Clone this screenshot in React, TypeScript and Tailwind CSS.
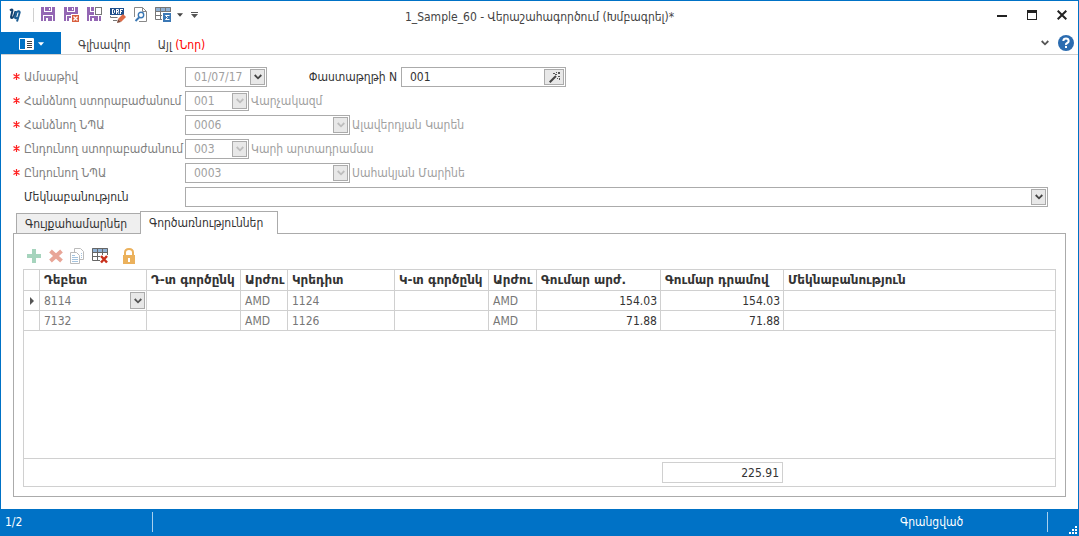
import type { ReactNode } from "react";

type IconProps = { className?: string };

const DisketteShape = () => (
  <>
    <path fill="#9467b4" d="M0 0h3v5h8V0h3v14h-2V8H2v6H0z" />
    <path fill="#9467b4" d="M4 0h6v4H4zM3 9h8v5H3z" />
    <path fill="#fff" d="M8 1h1v2H8zM5 11h2v3H5z" />
  </>
);

const SaveIcon = () => (
  <svg width="16" height="16" viewBox="0 0 16 16" shapeRendering="crispEdges">
    <DisketteShape />
  </svg>
);

const SaveCloseIcon = () => (
  <svg width="16" height="16" viewBox="0 0 16 16">
    <DisketteShape />
    <path fill="#fff" d="M7 7h9v9H7z" />
    <path fill="#d9603f" d="M8 8h7v7H8z" />
    <path stroke="#fff" strokeWidth="1.3" d="M9.500 9.500l4 4M13.500 9.500l-4 4" />
  </svg>
);

const SaveNewIcon = () => (
  <svg width="16" height="16" viewBox="0 0 16 16" shapeRendering="crispEdges">
    <DisketteShape />
    <path fill="#fff" d="M7 0h9v9H7z" />
    <path fill="#fff" stroke="#777" d="M8.500 .5h6v7h-6z" />
  </svg>
);

const DraftIcon = () => (
  <svg width="17" height="17" viewBox="0 0 17 17">
    <path fill="#1f4f8b" d="M1 1h14v7H1z" />
    <path
      fill="none"
      stroke="#fff"
      d="M3.500 2v5M3 2.500h1.500l1 1v2l-1 1H3M7.500 2v5M7 2.500h2.500v2H7M8.500 4.500l1.500 2.500M11.500 2v5M11 2.500h3M11 4.500h2"
    />
    <path fill="none" stroke="#777" d="M1.500 9v1.500h7M4 13.500h4" />
    <path fill="#dd6b47" d="M14 7l3 3-5 5-3-3z" />
    <path fill="#7d4a3a" d="M9 12l3 3-4 1z" />
  </svg>
);

const PreviewIcon = () => (
  <svg width="14" height="16" viewBox="0 0 14 16" fill="none">
    <path stroke="#888" d="M.5 10V.5h8l4 4v10H5" />
    <path stroke="#888" d="M8.500 .5v4h4" />
    <circle cx="7" cy="8" r="2.700" fill="#fff" stroke="#3b78b5" strokeWidth="1.400" />
    <path stroke="#3b78b5" strokeWidth="2" d="M5 10.500L1.500 14" />
  </svg>
);

const SumGridIcon = () => (
  <svg width="17" height="16" viewBox="0 0 17 16">
    <path fill="#8fb0d3" d="M0 0h16v4H0z" />
    <path fill="none" stroke="#777" d="M.5 .5h15v12H.5zM0 4.500h16M0 8.500h9M5.500 0v13M10.500 0v6" />
    <path fill="#fff" d="M7 5h10v11H7z" />
    <path fill="#3b78b5" d="M8 6h8v9H8z" />
    <path fill="none" stroke="#fff" d="M14.500 8.500h-4l2 2-2 2h4" />
  </svg>
);

const Logo = () => (
  <svg width="13" height="15" viewBox="0 0 13 15" fill="none">
    <path stroke="#123f6d" strokeWidth="2" d="M1 2.500Q3.500.5 3.500 2.500L2 9q0 2 2.500 0" />
    <path stroke="#123f6d" strokeWidth="1.800" d="M4.500 9L6.500 3" />
    <path stroke="#1c5d94" strokeWidth="2" d="M6 5.500Q10.500 1.500 10.700 4.500L8 13.500M7.500 5L6 9.500q0 1.500 2.500 0" />
  </svg>
);

const Caret = ({ className = "" }: IconProps) => (
  <svg className={className} width="7" height="4" viewBox="0 0 7 4">
    <path fill="currentColor" d="M0 0h7L3.500 4z" />
  </svg>
);

const Chevron = ({ className = "" }: IconProps) => (
  <svg className={className} width="8" height="6" viewBox="0 0 8 6" fill="none">
    <path stroke="currentColor" strokeWidth="1.800" d="M.7 1L4 4.300 7.300 1" />
  </svg>
);

const WandIcon = () => (
  <svg width="11" height="11" viewBox="0 0 11 11">
    <path stroke="#444" strokeWidth="2" d="M.7 10.300L7 4" />
    <path fill="#555" d="M4 1h2v1H4zM7 0h1v1H7zM9 0h2v2H9zM6 2h2v1H6zM9 4h2v1H9zM8 6h1v1H8zM10 6h1v2h-1z" />
  </svg>
);

const AddIcon = () => (
  <svg width="14" height="14" viewBox="0 0 14 14">
    <path fill="#a6d4bd" d="M5 0h4v5h5v4H9v5H5V9H0V5h5z" />
  </svg>
);

const RemoveIcon = () => (
  <svg width="14" height="14" viewBox="0 0 14 14">
    <path stroke="#e8a597" strokeWidth="4" d="M1.500 2l11 10M12.500 2l-11 10" />
  </svg>
);

const CopyIcon = () => (
  <svg width="15" height="16" viewBox="0 0 15 16" fill="#fff">
    <path stroke="#bbb" d="M4.500 .5h6l3 3v8h-9z" />
    <path stroke="#bbb" d="M.5 4.500h6l3 3v8h-9z" />
    <path stroke="#a4c3de" d="M2 7.500h3M2 9.500h6M2 11.500h6M2 13.500h6M11 5.500h1M11 7.500h1M11 9.500h1" />
  </svg>
);

const GridDeleteIcon = () => (
  <svg width="17" height="16" viewBox="0 0 17 16">
    <path fill="#8fb0d3" d="M0 0h16v4H0z" />
    <path fill="none" stroke="#666" d="M.5 .5h15v12H.5zM0 4.500h16M0 8.500h16M5.500 0v13M10.500 0v13" />
    <path fill="#fff" d="M8 7h9v9H8z" />
    <path stroke="#c8301c" strokeWidth="2.500" d="M9 8l6 6.500M15 8l-6 6.500" />
  </svg>
);

const LockIcon = () => (
  <svg width="12" height="16" viewBox="0 0 12 16">
    <path fill="none" stroke="#ebb15c" strokeWidth="2" d="M2 8V4.500Q2 1 6 1t4 3.500V8" />
    <path fill="#ebb15c" d="M0 7h12v9H0z" />
    <path fill="#fff" d="M5 10h2v4H5z" />
  </svg>
);

const IconButton = ({
  label,
  className = "",
  children,
}: {
  label: string;
  className?: string;
  children: ReactNode;
}) => (
  <button
    type="button"
    aria-label={label}
    className={`flex h-4 items-center justify-center ${className}`}
  >
    {children}
  </button>
);

type ComboProps = {
  id: string;
  value: string;
  className: string;
  disabled?: boolean;
  dark?: boolean;
};

const Combo = ({ id, value, className, disabled, dark }: ComboProps) => (
  <div className={`relative h-5 border border-[#ababab] bg-white ${className}`}>
    <select
      id={id}
      disabled={disabled}
      defaultValue={value}
      className="block h-full w-full appearance-none bg-transparent pl-2 text-[#a0a0a0] opacity-100 outline-none"
    >
      <option>{value}</option>
    </select>
    <span
      className={`pointer-events-none absolute inset-y-px right-px flex w-[15px] items-center justify-center border border-[#ababab] bg-[#e8e8e8] ${
        dark ? "text-[#444]" : "text-[#bdbdbd]"
      }`}
    >
      <Chevron />
    </span>
  </div>
);

const Label = ({
  htmlFor,
  required,
  children,
}: {
  htmlFor: string;
  required?: boolean;
  children: ReactNode;
}) => (
  <label
    htmlFor={htmlFor}
    className={`flex w-[172px] shrink-0 whitespace-nowrap ${
      required ? "text-[#808080]" : "text-[#333]"
    }`}
  >
    <span className="w-[11px] shrink-0">
      {required && (
        <svg className="mt-[5px]" width="7" height="7" viewBox="0 0 7 7">
          <path stroke="#f22" strokeWidth="1.200" d="M3.500 0v7M.5 1.500l6 4M6.500 1.500l-6 4" />
        </svg>
      )}
    </span>
    {children}
  </label>
);

const columns = [
  { title: "", width: "w-4" },
  { title: "Դեբետ", width: "w-[107px]" },
  { title: "Դ-տ գործընկ", width: "w-[94px]" },
  { title: "Արժու", width: "w-[47px]" },
  { title: "Կրեդիտ", width: "w-[107px]" },
  { title: "Կ-տ գործընկ", width: "w-[94px]" },
  { title: "Արժու", width: "w-12" },
  { title: "Գումար արժ.", width: "w-[124px]" },
  { title: "Գումար դրամով", width: "w-[123px]" },
  { title: "Մեկնաբանություն", width: "" },
];

const rows = [
  { debit: "8114", credit: "1124", currency: "AMD", amount: "154.03", active: true },
  { debit: "7132", credit: "1126", currency: "AMD", amount: "71.88", active: false },
];

const cell = "h-5 border-r border-b border-[#d0d0d0] py-0 pl-1 last:border-r-0";

const TitleBar = () => (
  <header className="flex h-[31px] items-center px-2 pb-[3px]">
    <div className="flex w-[220px] items-center">
      <Logo />
      <span className="mr-[3px] ml-[11px] h-[14px] w-px bg-[#d0d0d0]" />
      <IconButton label="Save" className="w-[23px]"><SaveIcon /></IconButton>
      <IconButton label="Save and close" className="w-[23px]"><SaveCloseIcon /></IconButton>
      <IconButton label="Save and new" className="w-[23px]"><SaveNewIcon /></IconButton>
      <IconButton label="Draft" className="w-[23px]"><DraftIcon /></IconButton>
      <IconButton label="Preview" className="w-[23px]"><PreviewIcon /></IconButton>
      <IconButton label="Totals" className="w-[23px]"><SumGridIcon /></IconButton>
      <IconButton label="Totals menu" className="ml-[2px]"><Caret className="w-[6px] text-[#444]" /></IconButton>
      <IconButton label="Customize" className="ml-2">
        <svg width="7" height="6" viewBox="0 0 7 6">
          <path fill="#555" d="M0 0h7v1H0zM0 2h7L3.500 6z" />
        </svg>
      </IconButton>
    </div>
    <h1 className="flex-1 pt-1 text-center text-[#444]">
      1_Sample_60 - Վերաշահագործում (Խմբագրել)*
    </h1>
    <div className="flex w-[220px] items-center justify-end gap-5">
      <IconButton label="Minimize">
        <svg width="10" height="10" viewBox="0 0 10 10">
          <path fill="#222" d="M0 5h10v2H0z" />
        </svg>
      </IconButton>
      <IconButton label="Maximize">
        <svg width="10" height="10" viewBox="0 0 10 10">
          <path fill="#222" d="M0 0h10v10H0zM1 3v6h8V3z" fillRule="evenodd" />
        </svg>
      </IconButton>
      <IconButton label="Close" className="mr-[3px]">
        <svg width="10" height="10" viewBox="0 0 10 10">
          <path stroke="#222" strokeWidth="2" d="M.7 .7l8.600 8.600M9.300 .7L.7 9.300" />
        </svg>
      </IconButton>
    </div>
  </header>
);

const Ribbon = () => (
  <nav className="flex h-[23px] items-center border-b border-[#d0d0d0]">
    <button
      type="button"
      aria-label="Menu"
      className="flex h-full w-[60px] items-center justify-center gap-1 bg-[#0072c6] pt-[2px] text-white"
    >
      <svg width="15" height="12" viewBox="0 0 15 12" fill="none">
        <path stroke="#fff" d="M.5 .5h14v11H.5zM6.500 0v12" />
        <path fill="#fff" d="M7 1h7v10H7z" />
        <path stroke="#444" d="M8 3.500h5M8 5.500h5M8 7.500h5M8 9.500h5" />
      </svg>
      <Caret className="w-[6px]" />
    </button>
    <button type="button" className="ml-[17px] pt-1 text-[#444]">Գլխավոր</button>
    <button type="button" className="ml-[27px] pt-1 text-[#444]">
      Այլ <span className="text-[#f00]">(Նոր)</span>
    </button>
    <div className="ml-auto flex items-center gap-[9px] pr-1">
      <IconButton label="Collapse ribbon"><Chevron className="text-[#555]" /></IconButton>
      <IconButton label="Help">
        <svg width="16" height="16" viewBox="0 0 16 16" fill="none">
          <circle cx="8" cy="8" r="8" fill="#2b6cb0" />
          <path stroke="#fff" strokeWidth="2" d="M5.300 6q.2-2.500 2.700-2.500T10.700 6q0 1.300-1.500 2T8 10M8 11v2" />
        </svg>
      </IconButton>
    </div>
  </nav>
);

const DocumentForm = () => (
  <form className="flex flex-col gap-1 pt-3 pr-[30px] pl-3">
    <div className="flex items-center">
      <Label htmlFor="date" required>Ամսաթիվ</Label>
      <Combo id="date" value="01/07/17" className="w-[82px]" dark />
      <label htmlFor="doc-number" className="flex-none basis-[134px] pr-1 text-right text-[#333]">
        Փաստաթղթի N
      </label>
      <div className="flex h-5 w-[165px] border border-[#ababab] p-px">
        <input
          id="doc-number"
          defaultValue="001"
          className="w-full min-w-0 pl-[7px] text-[#333] outline-none"
        />
        <button
          type="button"
          aria-label="Generate number"
          className="flex w-5 shrink-0 items-center justify-center border border-[#ababab] bg-[#e8e8e8]"
        >
          <WandIcon />
        </button>
      </div>
    </div>
    <div className="flex items-center text-[#a0a0a0]">
      <Label htmlFor="from-unit" required>Հանձնող ստորաբաժանում</Label>
      <Combo id="from-unit" value="001" className="mr-[2px] w-16" disabled />
      Վարչակազմ
    </div>
    <div className="flex items-center text-[#a0a0a0]">
      <Label htmlFor="from-person" required>Հանձնող ՆՊԱ</Label>
      <Combo id="from-person" value="0006" className="mr-[2px] w-[165px]" disabled />
      Ալավերդյան Կարեն
    </div>
    <div className="flex items-center text-[#a0a0a0]">
      <Label htmlFor="to-unit" required>Ընդունող ստորաբաժանում</Label>
      <Combo id="to-unit" value="003" className="mr-[2px] w-16" disabled />
      Կարի արտադրամաս
    </div>
    <div className="flex items-center text-[#a0a0a0]">
      <Label htmlFor="to-person" required>Ընդունող ՆՊԱ</Label>
      <Combo id="to-person" value="0003" className="mr-[2px] w-[165px]" disabled />
      Սահակյան Մարինե
    </div>
    <div className="flex items-center">
      <Label htmlFor="comment">Մեկնաբանություն</Label>
      <Combo id="comment" value="" className="flex-1" dark />
    </div>
  </form>
);

const EntriesTable = () => (
  <div className="mx-[9px] mb-[9px] flex flex-1 flex-col border border-[#d0d0d0]">
    <table className="w-full table-fixed border-separate border-spacing-0">
      <colgroup>
        {columns.map((column, i) => (
          <col key={i} className={column.width} />
        ))}
      </colgroup>
      <thead>
        <tr className="text-left font-['DejaVu_Sans',sans-serif] text-[#333]">
          {columns.map((column, i) => (
            <th key={i} className={`${cell} h-[21px] font-bold whitespace-nowrap`}>
              {column.title}
            </th>
          ))}
        </tr>
      </thead>
      <tbody className="text-[#777]">
        {rows.map((row) => (
          <tr key={row.debit}>
            <td className={cell}>
              {row.active && (
                <svg className="ml-[2px]" width="4" height="8" viewBox="0 0 4 8">
                  <path fill="#555" d="M0 0l4 4-4 4z" />
                </svg>
              )}
            </td>
            <td className={cell}>
              {row.active ? (
                <div className="relative">
                  <select
                    aria-label="Դեբետ"
                    defaultValue={row.debit}
                    className="block h-[19px] w-full appearance-none outline-none"
                  >
                    <option>{row.debit}</option>
                  </select>
                  <span className="pointer-events-none absolute inset-y-px right-px flex w-[15px] items-center justify-center border border-[#ababab] bg-[#e8e8e8] text-[#555]">
                    <Chevron />
                  </span>
                </div>
              ) : (
                row.debit
              )}
            </td>
            <td className={cell} />
            <td className={cell}>{row.currency}</td>
            <td className={cell}>{row.credit}</td>
            <td className={cell} />
            <td className={cell}>{row.currency}</td>
            <td className={`${cell} pr-[3px] text-right text-[#333]`}>{row.amount}</td>
            <td className={`${cell} pr-[3px] text-right text-[#333]`}>{row.amount}</td>
            <td className={cell} />
          </tr>
        ))}
      </tbody>
    </table>
    <div className="mt-auto flex h-7 items-center border-t border-[#d0d0d0] pl-[638px] text-[#333]">
      <output className="h-[21px] w-[121px] border border-[#d0d0d0] pr-[3px] text-right leading-5">
        225.91
      </output>
    </div>
  </div>
);

const App = () => (
  <div className="flex min-h-screen flex-col border border-[#0072c6] bg-white font-['DejaVu_Sans_Condensed','DejaVu_Sans',sans-serif] text-[12px] leading-[18px]">
    <TitleBar />
    <Ribbon />
    <DocumentForm />
    <main className="mt-1 flex flex-1 flex-col px-3 pb-3">
      <div role="tablist" className="relative z-10 -mb-px flex items-end pl-[3px] text-[#333]">
        <button
          type="button"
          role="tab"
          aria-selected="false"
          className="h-[21px] w-[124px] border border-r-0 border-[#ababab] bg-[#efefef] pl-2 text-left"
        >
          Գույքահամարներ
        </button>
        <button
          type="button"
          role="tab"
          aria-selected="true"
          className="h-[23px] w-[138px] border border-b-0 border-[#ababab] bg-white pl-2 text-left"
        >
          Գործառնություններ
        </button>
      </div>
      <section className="flex flex-1 flex-col border border-[#ababab]">
        <div className="flex h-[35px] items-end pb-[5px] pl-[13px]">
          <IconButton label="Add"><AddIcon /></IconButton>
          <IconButton label="Delete" className="ml-2"><RemoveIcon /></IconButton>
          <IconButton label="Copy" className="ml-[7px]"><CopyIcon /></IconButton>
          <IconButton label="Clear table" className="ml-[7px]"><GridDeleteIcon /></IconButton>
          <IconButton label="Lock" className="ml-[14px]"><LockIcon /></IconButton>
        </div>
        <EntriesTable />
      </section>
    </main>
    <footer className="flex h-[26px] items-center bg-[#0072c6] text-white">
      <span className="w-[151px] pl-1">1/2</span>
      <span className="h-5 w-px bg-[#a8d0ee]" />
      <span className="ml-auto w-[147px]">Գրանցված</span>
      <span className="h-5 w-px bg-[#a8d0ee]" />
      <svg className="ml-[21px] self-end" width="9" height="9" viewBox="0 0 9 9">
        <path fill="#fff" d="M6 0h2v2H6zM3 3h2v2H3zM6 3h2v2H6zM0 6h2v2H0zM3 6h2v2H3zM6 6h2v2H6z" />
      </svg>
    </footer>
  </div>
);

export default App;
